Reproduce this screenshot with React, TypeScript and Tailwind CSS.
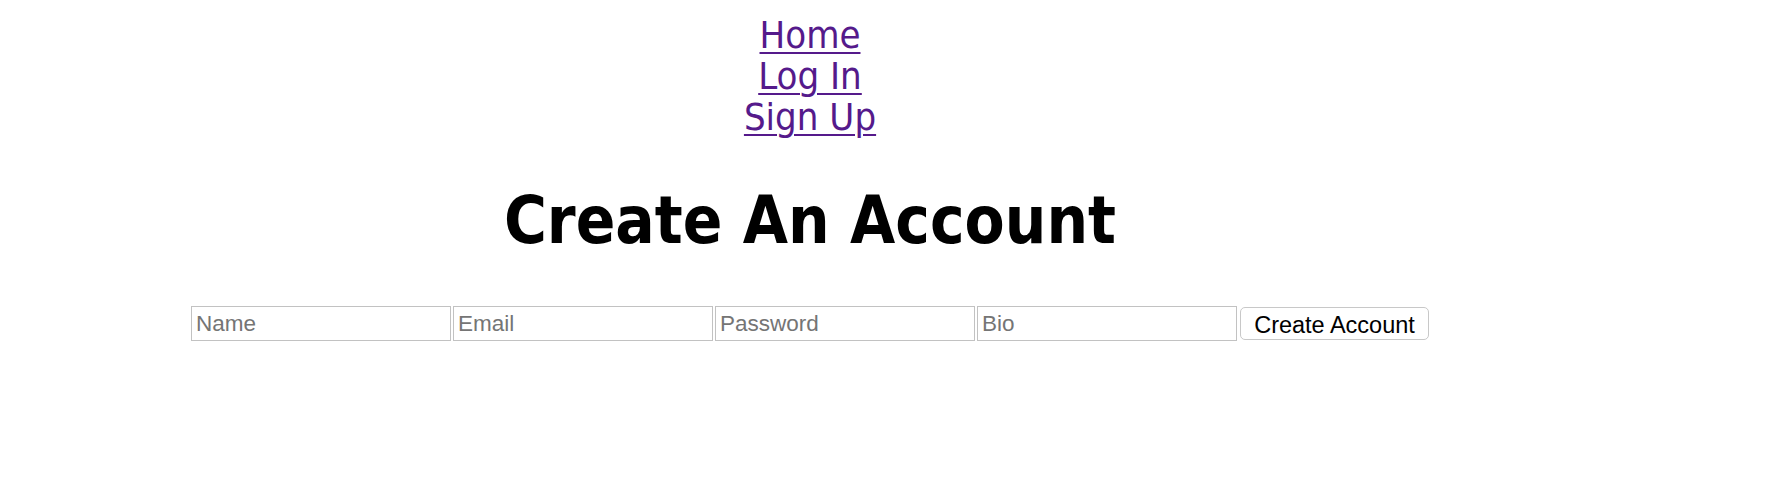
const fields = ["Name", "Email", "Password", "Bio"];

export default function App() {
  return (
    <div className="min-h-[492px] w-full bg-white">
      <div className="w-[1620px] pt-[15px] text-center font-['DejaVu_Sans_Condensed','DejaVu_Sans',sans-serif]">
        <nav className="flex flex-col items-center text-[38px] leading-[41px]">
          <a href="#" className="text-[#551a8b] underline decoration-2 underline-offset-[4px]">
            Home
          </a>
          <a href="#" className="text-[#551a8b] underline decoration-2 underline-offset-[4px]">
            Log In
          </a>
          <a href="#" className="text-[#551a8b] underline decoration-2 underline-offset-[4px]">
            Sign Up
          </a>
        </nav>

        <h1 className="mt-[45px] text-[65px] font-bold leading-[75px] text-black">
          Create An Account
        </h1>

        <form className="mt-[48px] flex justify-center gap-[2px] font-['Liberation_Sans',Arial,sans-serif] text-[22.5px]">
          {fields.map((field) => (
            <input
              key={field}
              type="text"
              placeholder={field}
              className="h-[35px] w-[260px] border border-[#c2c2c2] px-[4px] text-black placeholder:text-[#757575] outline-none"
            />
          ))}
          <button
            type="button"
            className="ml-[1px] mt-[1px] h-[33px] w-[189px] rounded-[5px] border border-[#c8c8c8] bg-white text-[23.5px] text-black"
          >
            Create Account
          </button>
        </form>
      </div>
    </div>
  );
}
